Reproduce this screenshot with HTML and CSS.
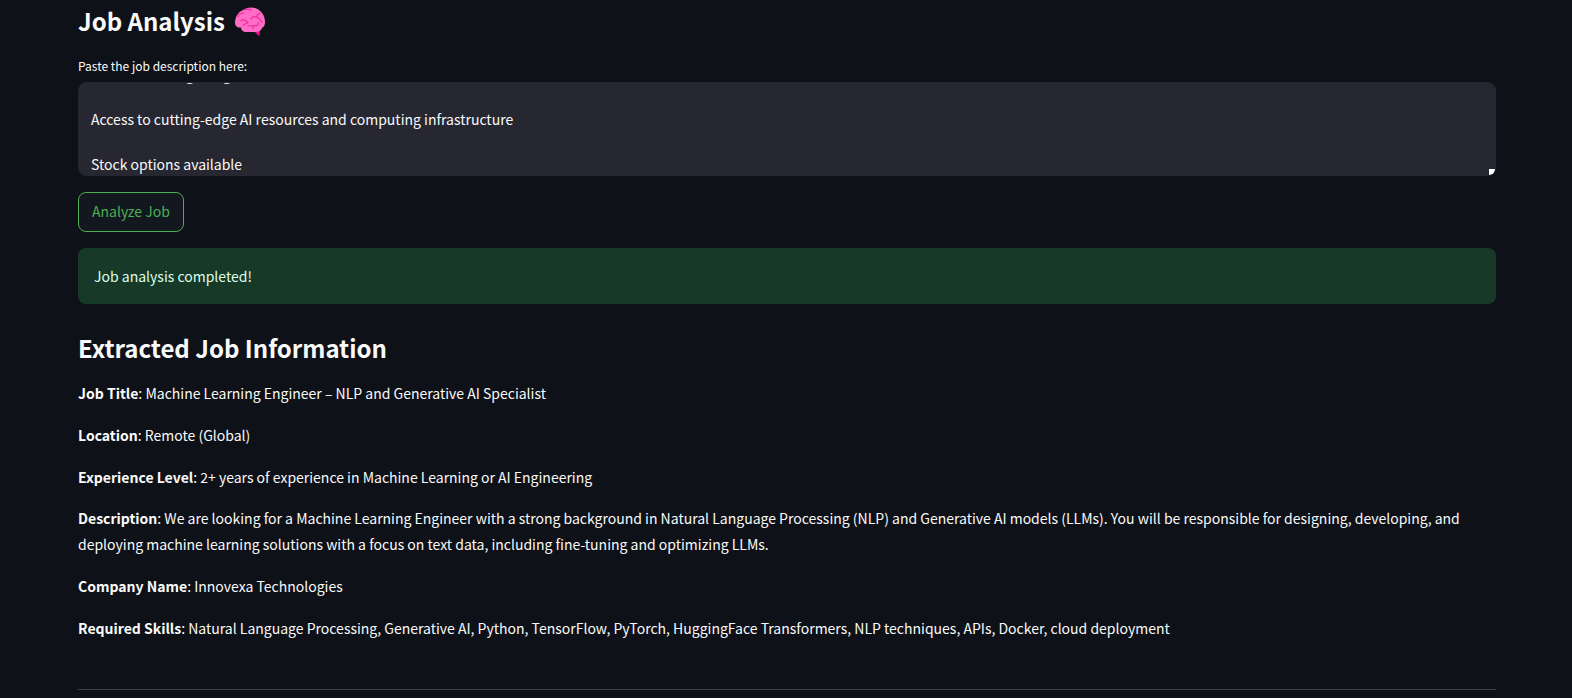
FILE: index.html
```html
<!DOCTYPE html>
<html lang="en">
<head>
<meta charset="utf-8">
<meta name="viewport" content="width=device-width, initial-scale=1">
<title>Job Analysis</title>
<link rel="stylesheet" href="styles.css">
</head>
<body>
<main class="page">
  <h2 class="heading">Job Analysis
    <svg class="brain" viewBox="0 0 32 32" aria-hidden="true">
      <path d="M20 25 H26 L25.500 31 Q24.500 31 21 27 Z" fill="#f0108c"/>
      <path d="M1 18 C1 12 4 7 9 5 C13 1.500 21 1.500 25 5 C29 8 31 12 31 17 C31 20 30 22 28 23 C27 26 24 27 20 27 H12 C9 27 7 25 7 22.500 C3 23 1 21 1 18 Z" fill="#ff6dc6"/>
      <g fill="none" stroke="#ee2c9c" stroke-width="1.200" stroke-linecap="round" stroke-linejoin="round">
        <path d="M4 11.500 C5 9 7 8 10 8 M10 5 C12 4 15 4 17 5"/>
        <path d="M26 8 C24 9 23 10 22.500 12 C20 11 18 12 17 14 M22.500 12 C24 13 26 13.500 28 17"/>
        <path d="M7 15.500 C10 14 12 15.500 14 17.500 C12 18.500 10 19 9 20.500"/>
        <path d="M14 21 C17 20 20 22 24 20 M19 21 V23.500 M24 20 V17.500"/>
      </g>
    </svg>
  </h2>

  <form class="form" onsubmit="return false">
    <label class="label" for="description">Paste the job description here:</label>
    <div class="field">
      <textarea class="input" id="description">Annual learning budget ($2,000)

Access to cutting-edge AI resources and computing infrastructure

Stock options available</textarea>
      <span class="grip"></span>
    </div>
    <button class="button" type="submit">Analyze Job</button>
  </form>

  <div class="alert" role="status">Job analysis completed!</div>

  <section class="results">
    <h2 class="heading">Extracted Job Information</h2>
    <p><strong>Job Title</strong>: Machine Learning Engineer – NLP and Generative AI Specialist</p>
    <p><strong>Location</strong>: Remote (Global)</p>
    <p><strong>Experience Level</strong>: 2+ years of experience in Machine Learning or AI Engineering</p>
    <p><strong>Description</strong>: We are looking for a Machine Learning Engineer with a strong background in Natural Language Processing (NLP) and Generative AI models (LLMs). You will be responsible for designing, developing, and deploying machine learning solutions with a focus on text data, including fine-tuning and optimizing LLMs.</p>
    <p><strong>Company Name</strong>: Innovexa Technologies</p>
    <p><strong>Required Skills</strong>: Natural Language Processing, Generative AI, Python, TensorFlow, PyTorch, HuggingFace Transformers, NLP techniques, APIs, Docker, cloud deployment</p>
  </section>
  <hr class="divider">
</main>
<script src="script.js"></script>
</body>
</html>
```
FILE: styles.css
```css
* {
  box-sizing: border-box;
}

body {
  margin: 0;
  background: #0e1117;
  color: #fafafa;
  font: 14px/26px "Noto Sans CJK SC", "Source Sans Pro", sans-serif;
}

.page {
  padding: 4px 76px 8px 78px;
}

.heading {
  display: flex;
  align-items: center;
  gap: 9px;
  margin: 0;
  font-size: 24px;
  line-height: 34px;
  font-weight: 600;
}

.brain {
  width: 32px;
  height: 32px;
}

.form {
  display: flex;
  flex-direction: column;
  align-items: flex-start;
  margin-top: 16px;
}

.label {
  margin-bottom: 4px;
  font-size: 12px;
  line-height: 24px;
}

.field {
  position: relative;
  width: 100%;
  height: 94px;
  margin-bottom: 16px;
}

.input {
  display: block;
  width: 100%;
  height: 100%;
  padding: 12px 12px 0;
  border: 1px solid #262730;
  border-radius: 8px;
  outline: 0;
  background: #262730;
  color: inherit;
  font: inherit;
  line-height: 1.6;
  resize: none;
  scrollbar-width: none;
}

.grip {
  position: absolute;
  right: 1px;
  bottom: 1px;
  width: 6px;
  height: 6px;
  border-bottom-right-radius: 6px;
  background: #fff;
}

.button {
  height: 40px;
  padding: 0 13px 2px;
  border: 1px solid #4caf50;
  border-radius: 8px;
  background: #131720;
  color: #4caf50;
  font: inherit;
  line-height: 24px;
}

.alert {
  margin-top: 16px;
  padding: 15px 16px;
  border-radius: 8px;
  background: #173928;
  color: #dffde9;
}

.results {
  padding-top: 27px;
  line-height: 1.84;
}

.results .heading {
  margin-bottom: 16px;
}

.results p {
  margin: 0 0 16px;
}

.divider {
  height: 1px;
  margin: 48px 0 0;
  border: 0;
  background: #3d4045;
}
```
FILE: script.js
```js
// Show the end of the pasted description.
const input = document.getElementById("description");
input.scrollTop = input.scrollHeight;
```
